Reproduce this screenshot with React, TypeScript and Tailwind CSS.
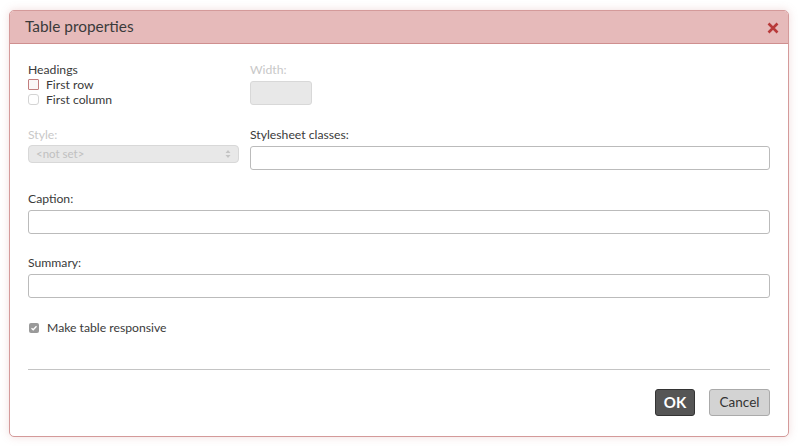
import React from "react";

export default function App() {
  return (
    <div className="w-[800px] h-[447px] bg-white relative overflow-hidden" style={{ fontFamily: "Lato, 'Open Sans', sans-serif" }}>
      <div className="absolute left-[9px] top-[10px] w-[780px] h-[427px] bg-white border border-[#d49a9a] rounded-[5px] shadow-[0_0_8px_rgba(200,120,120,0.25)] flex flex-col overflow-hidden">
        <div className="h-[33px] bg-[#e6baba] border-b border-[#cf8f8f] flex items-center justify-between pl-[15px] pr-[9px] shrink-0">
          <span className="text-[15.4px] text-[#3a3a3a]">Table properties</span>
          <svg width="12" height="12" viewBox="0 0 12 12" className="mt-[2px]">
            <path d="M1.5 1.5 L10.5 10.5 M10.5 1.5 L1.5 10.5" stroke="#b83a3a" strokeWidth="2.6" strokeLinecap="butt" />
          </svg>
        </div>
        <div className="flex flex-col px-[18px] pt-[18px] text-[12.2px] text-[#3a3a3a]">
          <div className="flex">
            <div className="w-[222px] flex flex-col">
              <span className="leading-[15px]">Headings</span>
              <label className="flex items-center leading-[15px]">
                <span className="w-[11px] h-[11px] border border-[#c27e7e] bg-[#fbf6f6] rounded-[1px] mr-[7px]" />
                First row
              </label>
              <label className="flex items-center leading-[15px]">
                <span className="w-[11px] h-[11px] border border-[#d4d4d4] rounded-[3px] mr-[7px]" />
                First column
              </label>
            </div>
            <div className="flex flex-col">
              <span className="leading-[15px] text-[#c8c8c8]">Width:</span>
              <div className="mt-[4px] w-[62px] h-[24px] bg-[#e8e8e8] border border-[#d8d8d8] rounded-[3px]" />
            </div>
          </div>
          <div className="flex mt-[20px]">
            <div className="w-[222px] flex flex-col">
              <span className="leading-[15px] text-[#c8c8c8]">Style:</span>
              <div className="mt-[3px] w-[211px] h-[18px] bg-[#e8e8e8] border border-[#d8d8d8] rounded-[4px] flex items-center justify-between px-[7px] text-[#c0c0c0] text-[11.5px]">
                <span>&lt;not set&gt;</span>
                <svg width="6" height="10" viewBox="0 0 6 10">
                  <path d="M0.5 4 L3 1 L5.5 4 Z M0.5 6 L3 9 L5.5 6 Z" fill="#c4c4c4" />
                </svg>
              </div>
            </div>
            <div className="flex flex-col flex-1">
              <span className="leading-[15px]">Stylesheet classes:</span>
              <div className="mt-[4px] h-[24px] border border-[#bbb] rounded-[3px]" />
            </div>
          </div>
          <div className="flex flex-col mt-[21px]">
            <span className="leading-[15px]">Caption:</span>
            <div className="mt-[4px] h-[24px] border border-[#bbb] rounded-[3px]" />
          </div>
          <div className="flex flex-col mt-[21px]">
            <span className="leading-[15px]">Summary:</span>
            <div className="mt-[4px] h-[24px] border border-[#bbb] rounded-[3px]" />
          </div>
          <label className="flex items-center mt-[22px] leading-[15px]">
            <span className="w-[10px] h-[10px] bg-[#9a9a9a] rounded-[2px] mr-[8px] ml-[1px] flex items-center justify-center">
              <svg width="8" height="8" viewBox="0 0 8 8">
                <path d="M1.5 4.2 L3.2 5.8 L6.5 2.2" stroke="white" strokeWidth="1.3" fill="none" />
              </svg>
            </span>
            Make table responsive
          </label>
          <div className="mt-[34px] h-px bg-[#c4c4c4]" />
          <div className="flex justify-end gap-[14px] mt-[19px]">
            <button className="w-[40px] h-[27px] bg-[#555] border border-[#333] rounded-[3px] text-white text-[15px] font-bold">OK</button>
            <button className="w-[61px] h-[27px] bg-[#d3d3d3] border border-[#aaa] rounded-[3px] text-[#333] text-[13.5px]">Cancel</button>
          </div>
        </div>
      </div>
    </div>
  );
}
